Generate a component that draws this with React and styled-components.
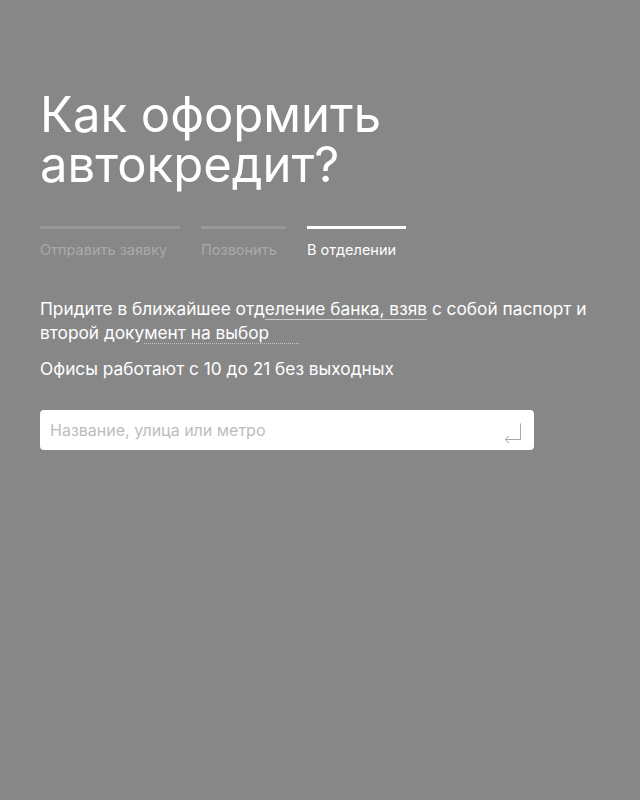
import React from 'react';
import styled, { createGlobalStyle } from 'styled-components';

const GlobalStyle = createGlobalStyle`
  html, body {
    margin: 0;
    padding: 0;
    background: #878787;
  }
  body {
    font-family: Inter, Roboto, "Noto Sans", Arial, sans-serif;
    color: #fff;
    -webkit-font-smoothing: antialiased;
  }
`;

const tabs = [
  { label: 'Отправить заявку', width: 140 },
  { label: 'Позвонить', width: 85 },
  { label: 'В отделении', width: 99, active: true },
];

const App = () => (
  <Page>
    <GlobalStyle />
    <Title>
      Как оформить
      <br />
      автокредит?
    </Title>
    <Tabs>
      {tabs.map(tab => (
        <Tab key={tab.label} $width={tab.width} $active={tab.active}>
          {tab.label}
        </Tab>
      ))}
    </Tabs>
    <Text>
      Придите в ближайшее отд<Underlined>еление банка, взяв</Underlined> с собой паспорт и
      второй доку<Dotted>мент на выбор</Dotted>
    </Text>
    <Text $small>Офисы работают с 10 до 21 без выходных</Text>
    <SearchBox>
      <SearchInput placeholder="Название, улица или метро" />
      <EnterIcon width="18" height="20" viewBox="0 0 18 20">
        <path d="M16.5 1.5 V17.5 H1" fill="none" stroke="#a9a9a9" strokeWidth="1" />
        <path d="M5 14 L1.2 17.5 L5 21" fill="none" stroke="#a9a9a9" strokeWidth="1" />
      </EnterIcon>
    </SearchBox>
  </Page>
);

export default App;

const Page = styled.div`
  padding: 90px 40px 0;
  min-height: 800px;
  box-sizing: border-box;
`;

const Title = styled.h1`
  margin: 0;
  font-size: 49px;
  font-weight: 400;
  line-height: 50px;
  letter-spacing: 0;
`;

const Tabs = styled.div`
  display: flex;
  gap: 21px;
  margin-top: 36px;
`;

const Tab = styled.div`
  width: ${p => p.$width}px;
  border-top: 3px solid ${p => (p.$active ? '#fff' : 'rgba(255,255,255,0.15)')};
  padding-top: 12px;
  font-size: 14.5px;
  line-height: 18px;
  white-space: nowrap;
  color: ${p => (p.$active ? '#fff' : 'rgba(255,255,255,0.3)')};
`;

const Text = styled.p`
  margin: ${p => (p.$small ? '12px' : '38px')} 0 0;
  font-size: 17.3px;
  line-height: 24px;
  max-width: 560px;
`;

const Underlined = styled.span`
  border-bottom: 1px solid rgba(255, 255, 255, 0.55);
`;

const Dotted = styled.span`
  padding-right: 30px;
  border-bottom: 1px dotted rgba(255, 255, 255, 0.5);
`;

const SearchBox = styled.div`
  position: relative;
  display: flex;
  align-items: center;
  width: 494px;
  height: 40px;
  margin-top: 29px;
  background: #fff;
  border-radius: 4px;
`;

const SearchInput = styled.input`
  flex: 1;
  border: 0;
  outline: none;
  background: transparent;
  padding: 0 10px;
  font-family: inherit;
  font-size: 16px;
  color: #333;
  &::placeholder {
    color: #bdbdbd;
  }
`;

const EnterIcon = styled.svg`
  flex: none;
  margin: 4px 12px 0 0;
  overflow: visible;
`;
